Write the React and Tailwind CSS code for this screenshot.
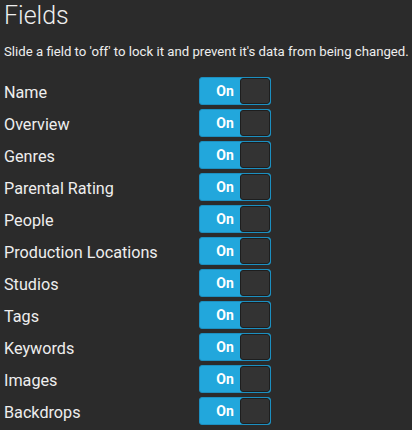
const fields = [
  'Name',
  'Overview',
  'Genres',
  'Parental Rating',
  'People',
  'Production Locations',
  'Studios',
  'Tags',
  'Keywords',
  'Images',
  'Backdrops',
];

function Toggle() {
  return (
    <div className="flex h-[28px] w-[72px] rounded-[3px] border border-[#1c8fc0] bg-[#22a7dc] overflow-hidden">
      <div className="flex w-[40px] items-center justify-center pl-[10px] text-[14px] font-bold text-white">On</div>
      <div className="flex-1 rounded-[3px] border border-[#1e1e1e] bg-[#333333]"></div>
    </div>
  );
}

export default function App() {
  return (
    <div className="min-h-[430px] overflow-hidden bg-[#2b2b2b] pl-[4px] text-[#eeeeee] font-['Roboto',sans-serif]">
      <h1 className="pt-[1px] text-[25px] font-light leading-[30px]">Fields</h1>
      <p className="mt-[13px] whitespace-nowrap text-[13.2px] leading-[16px]">Slide a field to 'off' to lock it and prevent it's data from being changed.</p>
      <div className="mt-[15px] flex flex-col">
        {fields.map((f) => (
          <div key={f} className="flex h-[32px] items-center">
            <span className="w-[195px] pt-[5px] text-[16.2px]">{f}</span>
            <Toggle />
          </div>
        ))}
      </div>
    </div>
  );
}
